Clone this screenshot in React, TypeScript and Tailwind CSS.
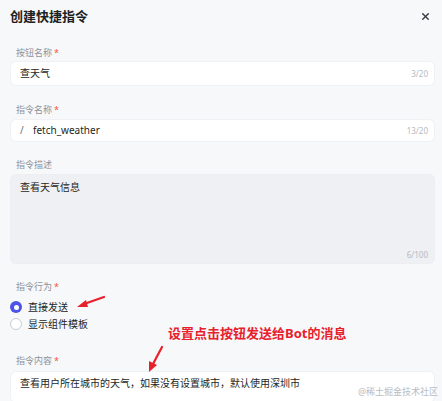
import { X } from 'lucide-react'

const font = { fontFamily: '"Noto Sans", "Noto Sans CJK SC", sans-serif' }

function Label({ text, required }: { text: string; required?: boolean }) {
  return (
    <div className="h-[12px] pl-[5px] text-[9px] leading-[12px] text-[#8f939b]">
      {text}
      {required && <span className="ml-[2px] text-[#f4553f]">*</span>}
    </div>
  )
}

export default function App() {
  return (
    <div className="relative h-[401px] w-[442px] overflow-hidden bg-[#f7f8fa]" style={font}>
      {/* Header */}
      <div className="flex h-[33px] items-center justify-between pl-[10px] pr-[11px]">
        <h1 className="text-[13px] font-semibold text-[#1d1f24]">创建快捷指令</h1>
        <X className="h-[11px] w-[11px] text-[#3a3d45]" strokeWidth={3} />
      </div>

      <div className="flex flex-col px-[11px] pr-[8px]">
        {/* Button name */}
        <div className="mt-[14px]">
          <Label text="按钮名称" required />
          <div className="mt-[3px] flex h-[23px] items-center justify-between rounded-[5px] bg-white pl-[9px] pr-[6px] shadow-[0_0_0_1px_#f0f1f4]">
            <span className="text-[10px] text-[#1d1f24]">查天气</span>
            <span className="text-[8px] text-[#b6b9c0]">3/20</span>
          </div>
        </div>

        {/* Command name */}
        <div className="mt-[19px]">
          <Label text="指令名称" required />
          <div className="mt-[4px] flex h-[21px] items-center justify-between rounded-[5px] bg-white pl-[9px] pr-[6px] shadow-[0_0_0_1px_#f0f1f4]">
            <div className="flex items-center text-[10px]">
              <span className="w-[13px] text-[#6b6f78]">/</span>
              <span className="text-[#1d1f24]">fetch_weather</span>
            </div>
            <span className="text-[8px] text-[#b6b9c0]">13/20</span>
          </div>
        </div>

        {/* Description */}
        <div className="mt-[18px]">
          <Label text="指令描述" />
          <div className="mt-[4px] flex h-[88px] flex-col justify-between rounded-[5px] bg-[#eff0f4] pb-[2px] pl-[9px] pr-[6px] pt-[5px] shadow-[0_0_0_1px_#eceef2]">
            <span className="text-[10px] text-[#1d1f24]">查看天气信息</span>
            <span className="self-end text-[8px] text-[#b6b9c0]">6/100</span>
          </div>
        </div>

        {/* Behaviour */}
        <div className="mt-[18px]">
          <Label text="指令行为" required />
          <div className="mt-[6px] flex flex-col">
            <div className="flex h-[16px] items-center gap-[6px] pl-[-0px]">
              <span className="ml-[-1px] flex h-[12px] w-[12px] items-center justify-center rounded-full bg-[#4d53e8]">
                <span className="h-[5px] w-[5px] rounded-full bg-white" />
              </span>
              <span className="text-[10px] text-[#1d1f24]">直接发送</span>
            </div>
            <div className="mt-[1px] flex h-[16px] items-center gap-[6px]">
              <span className="ml-[-1px] h-[12px] w-[12px] rounded-full border border-[#c9ccd3] bg-white" />
              <span className="text-[10px] text-[#1d1f24]">显示组件模板</span>
            </div>
          </div>
        </div>

        {/* Content */}
        <div className="mt-[23px]">
          <Label text="指令内容" required />
          <div className="mt-[5px] flex h-[30px] items-start rounded-[5px] bg-white pl-[9px] pt-[4px] shadow-[0_0_0_1px_#f0f1f4]">
            <span className="text-[10px] text-[#1d1f24]">查看用户所在城市的天气，如果没有设置城市，默认使用深圳市</span>
          </div>
        </div>
      </div>

      {/* Annotation */}
      <div className="absolute left-[168px] top-[324px] text-[13px] font-bold leading-[18px] text-[#e8202a]">
        设置点击按钮发送给Bot的消息
      </div>
      <svg className="absolute left-0 top-0" width="442" height="401" viewBox="0 0 442 401">
        <line x1="104" y1="297" x2="84" y2="304" stroke="#e8202a" strokeWidth="2.2" strokeLinecap="round" />
        <polygon points="77,307 86,300 88,307" fill="#e8202a" />
        <line x1="162" y1="347" x2="153" y2="364" stroke="#e8202a" strokeWidth="2.2" strokeLinecap="round" />
        <polygon points="149,372 149,361 157,365" fill="#e8202a" />
      </svg>

      <div className="absolute bottom-[3px] right-[4px] text-[9px] text-[#b9bcc2]">@稀土掘金技术社区</div>
    </div>
  )
}
